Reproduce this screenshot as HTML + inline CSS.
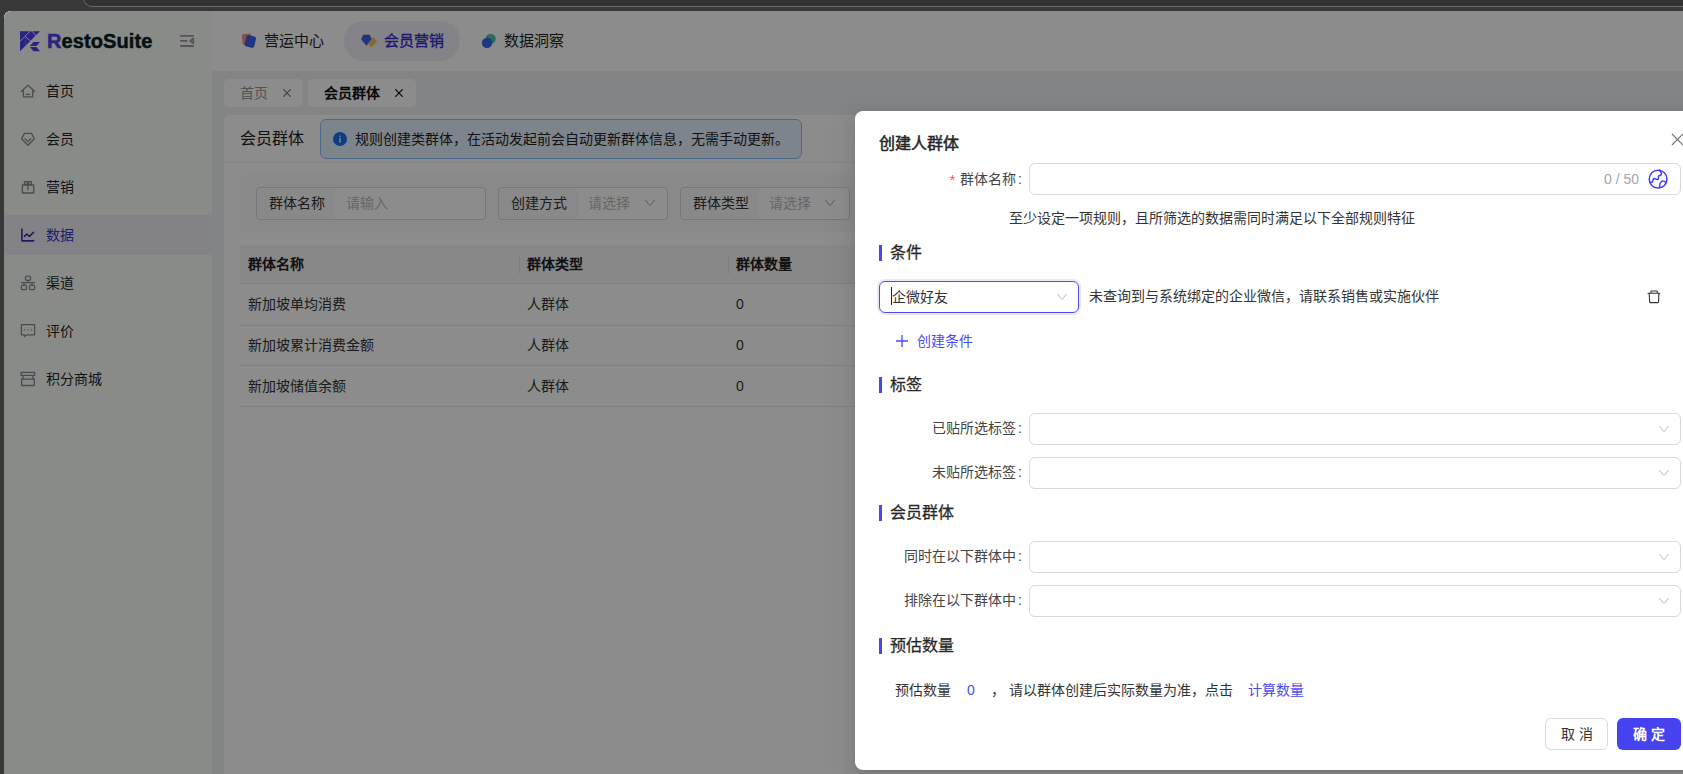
<!DOCTYPE html>
<html lang="zh-CN">
<head>
<meta charset="utf-8">
<style>
*{box-sizing:border-box;margin:0;padding:0}
html,body{width:1683px;height:774px;overflow:hidden}
body{background:#383838;font-family:"Liberation Sans",sans-serif;font-size:14px;color:#333;position:relative}
.abs{position:absolute}
#chrometab{left:83px;top:-19px;width:1700px;height:26px;border:1px solid #6a6a6a;border-radius:0 0 0 9px;background:#323232}
#win{left:4px;top:11px;width:1679px;height:763px;border-top-left-radius:7px;overflow:hidden;background:#fff}
#header{left:0;top:0;width:1679px;height:60px;background:#fff}
#sidebar{left:0;top:60px;width:208px;height:703px;background:#f9fdfa}
#content{left:208px;top:60px;width:1471px;height:703px;background:#eff1f4}
.menu{position:absolute;left:0;width:208px;height:40px;line-height:40px;font-size:14px;color:#1f1f1f}
.menu .ic{position:absolute;left:12px;top:9px;width:24px;height:24px}
.menu .tx{position:absolute;left:42px;top:0}
.menu.active{background:#eeeef6;color:#3b35c8}
.tab{position:absolute;top:8px;height:28px;border-radius:5px;background:#fff;font-size:14px;line-height:28px}
#mask{left:0;top:0;width:1679px;height:763px;background:rgba(0,0,0,0.45)}
#modal{left:855px;top:111px;width:900px;height:659px;background:#fff;border-radius:8px;box-shadow:0 6px 16px 0 rgba(0,0,0,0.08),0 3px 6px -4px rgba(0,0,0,0.12),0 9px 28px 8px rgba(0,0,0,0.05)}
.sec{position:absolute;left:24px;font-size:16px;color:#262626;line-height:20px;-webkit-text-stroke:0.25px #262626}
.sec:before{content:"";position:absolute;left:0;top:2px;width:3px;height:16px;background:#4a44f2}
.sec span{position:absolute;left:11px;top:0;white-space:nowrap}
.lbl{position:absolute;font-size:14px;color:#444;white-space:nowrap;text-align:right;line-height:20px}
.co{margin:0 8px 0 2px}
.inp{position:absolute;left:174px;width:652px;height:32px;border:1px solid #d9d9d9;border-radius:6px;background:#fff}
.arrow{position:absolute;right:10px;top:9px;width:12px;height:12px}
</style>
</head>
<body>
<div id="chrometab" class="abs"></div>
<div id="win" class="abs">
  <div id="header" class="abs">
    <div class="abs" style="left:0;top:0;width:208px;height:60px;background:#f9fdfa"></div>
    <!-- logo -->
    <svg class="abs" style="left:16px;top:20px" width="20" height="21" viewBox="0 0 20 21">
      <path d="M0 0.2H20L0 20.3Z" fill="#4b41f0"/>
      <path d="M9.9 14.9L13.4 11H20L16.5 14.9Z M9.9 16.1H16.5L20 20.2H13.4Z" fill="#4b41f0"/>
      <path d="M-0.5 10.9L10.4 0 M5.4 5.6L10.6 10.2 M11.8 0L16.3 4.9" stroke="#fff" stroke-width="0.9"/>
      <path d="M5.3 6.3V15.8" stroke="#fff" stroke-width="0.4" opacity="0.6"/>
    </svg>
    <div class="abs" style="left:43px;top:17px;font-size:20px;font-weight:bold;color:#0a1e24;letter-spacing:0.1px;line-height:26px;-webkit-text-stroke:0.5px #0a1e24"><span style="color:#4b41f0;-webkit-text-stroke:0.5px #4b41f0">R</span>estoSuite</div>
    <svg class="abs" style="left:172px;top:17px" width="24" height="24" viewBox="0 0 24 24">
      <path d="M4.2 7.9H17.8 M4.2 12.9H11.3 M4.2 18H17.8" stroke="#999" stroke-width="1.9"/>
      <path d="M17.3 10.3L14.2 12.9L17.3 15.5Z" stroke="#999" stroke-width="1.6" fill="none" stroke-linejoin="round"/>
    </svg>
    <div class="abs" style="left:340px;top:10px;width:116px;height:40px;border-radius:20px;background:#eeeef7"></div>
    <svg class="abs" style="left:232px;top:17px" width="24" height="24" viewBox="0 0 24 24">
      <rect x="6.2" y="5.8" width="9.2" height="11" rx="2" fill="#f59282" transform="rotate(-4 10.8 11.3)"/>
      <rect x="9.3" y="7.6" width="10" height="11.6" rx="2.2" fill="#3c62e6" transform="rotate(13 14.3 13.4)"/>
    </svg>
    <div class="abs" style="left:260px;top:19px;font-size:15px;line-height:22px;color:#1f1f1f">营运中心</div>
    <svg class="abs" style="left:352px;top:17px" width="24" height="24" viewBox="0 0 24 24">
      <path d="M17.4 9L21.1 13.6L15.5 19.8L12.4 16.1Z" fill="#f2c24a"/>
      <path d="M7.1 6.7H13.6L15.8 10.9L10.4 17.7L5.1 11.2Z" fill="#3c62e6"/>
    </svg>
    <div class="abs" style="left:380px;top:19px;font-size:15px;line-height:22px;color:#2f2bd0;-webkit-text-stroke:0.3px #2f2bd0">会员营销</div>
    <svg class="abs" style="left:472px;top:17px" width="24" height="24" viewBox="0 0 24 24">
      <circle cx="14.7" cy="10.9" r="5" fill="#45c4a6"/>
      <circle cx="11" cy="14.9" r="5.2" fill="#3c62e6"/>
    </svg>
    <div class="abs" style="left:500px;top:19px;font-size:15px;line-height:22px;color:#1f1f1f">数据洞察</div>
  </div>
  <div id="sidebar" class="abs">
    <div class="menu" style="top:0"><svg class="ic" viewBox="0 0 24 24"><path d="M5.3 11.5L11.9 5.1L18.6 11.5 M7.4 9.4V16.9H16.7V9.4 M10.2 14.4H13.8" stroke="#8a8a8a" stroke-width="1.3" fill="none" stroke-linejoin="round" stroke-linecap="round"/></svg><span class="tx">首页</span></div>
    <div class="menu" style="top:48px"><svg class="ic" viewBox="0 0 24 24"><path d="M8.4 5.4H15.5L18.3 10.7L11.9 17.2L5.6 10.7Z M9 10.7L11.9 13.6L14.7 10.8" stroke="#8a8a8a" stroke-width="1.3" fill="none" stroke-linejoin="round" stroke-linecap="round"/></svg><span class="tx">会员</span></div>
    <div class="menu" style="top:96px"><svg class="ic" viewBox="0 0 24 24"><path d="M6.4 9H17.7V17H6.4Z M11.9 5.5V13.6 M11.9 8.4C10.5 8.4 8.2 8.5 8.3 6.5C8.5 4.6 10.8 5 11.9 7.8C13 5 15.4 4.6 15.6 6.5C15.7 8.5 13.4 8.4 11.9 8.4" stroke="#8a8a8a" stroke-width="1.3" fill="none" stroke-linejoin="round" stroke-linecap="round"/></svg><span class="tx">营销</span></div>
    <div class="menu active" style="top:144px"><svg class="ic" viewBox="0 0 24 24"><path d="M5.9 5.1V16.9H17.7 M8.4 12.4L10.7 10.2L13.5 12.4L17.5 8.4" stroke="#3a33b8" stroke-width="1.6" fill="none" stroke-linejoin="round" stroke-linecap="round"/></svg><span class="tx">数据</span></div>
    <div class="menu" style="top:192px"><svg class="ic" viewBox="0 0 24 24"><rect x="9.5" y="4.2" width="5.1" height="4.2" rx="1.3" stroke="#8a8a8a" stroke-width="1.3" fill="none" stroke-linejoin="round" stroke-linecap="round"/><rect x="5.4" y="13.2" width="5.1" height="4.5" rx="1.3" stroke="#8a8a8a" stroke-width="1.3" fill="none" stroke-linejoin="round" stroke-linecap="round"/><rect x="13.5" y="13.2" width="5.1" height="4.5" rx="1.3" stroke="#8a8a8a" stroke-width="1.3" fill="none" stroke-linejoin="round" stroke-linecap="round"/><path d="M11.9 8.4V10.7 M5.4 10.7H18.6 M7.9 10.7V13.2 M16 10.7V13.2" stroke="#8a8a8a" stroke-width="1.3" fill="none" stroke-linejoin="round" stroke-linecap="round"/></svg><span class="tx">渠道</span></div>
    <div class="menu" style="top:240px"><svg class="ic" viewBox="0 0 24 24"><path d="M5.4 4.65H18.6V14.9H10.6L8.4 16.6V14.9H5.4Z" stroke="#8a8a8a" stroke-width="1.3" fill="none" stroke-linejoin="round" stroke-linecap="round"/><path d="M8.4 9.9H8.5 M11.9 9.9H12 M15.5 9.9H15.6" stroke="#8a8a8a" stroke-width="1.4" stroke-linecap="round"/></svg><span class="tx">评价</span></div>
    <div class="menu" style="top:288px"><svg class="ic" viewBox="0 0 24 24"><path d="M5.1 4.3H18.6V7.4H5.1Z M7 7.4V11.2 M16.9 7.4V11.2 M5.6 11.2H18.3V17.5H5.6Z" stroke="#8a8a8a" stroke-width="1.3" fill="none" stroke-linejoin="round" stroke-linecap="round"/></svg><span class="tx">积分商城</span></div>
  </div>
  <div id="content" class="abs">
    <div class="tab" style="left:12px;width:79px;color:#999"><span class="abs" style="left:16px">首页</span><svg class="abs" style="left:59px;top:10px" width="8" height="8" viewBox="0 0 8 8"><path d="M0.2 0.2L7.8 7.8M7.8 0.2L0.2 7.8" stroke="#777" stroke-width="1.1"/></svg></div>
    <div class="tab" style="left:96px;width:108px;color:#111;font-weight:bold"><span class="abs" style="left:16px">会员群体</span><svg class="abs" style="left:87px;top:10px" width="8" height="8" viewBox="0 0 8 8"><path d="M0.2 0.2L7.8 7.8M7.8 0.2L0.2 7.8" stroke="#111" stroke-width="1.2"/></svg></div>
    <!-- page header -->
    <div class="abs" style="left:12px;top:44px;width:1460px;height:48px;background:#fff;border-radius:6px 6px 0 0;border-bottom:1px solid #f0f0f0"></div>
    <div class="abs" style="left:28px;top:57px;font-size:16px;line-height:22px;color:#222">会员群体</div>
    <div class="abs" style="left:108px;top:48px;width:482px;height:40px;border:1px solid #8fc0f8;border-radius:6px;background:#e6f1fd"></div>
    <svg class="abs" style="left:121px;top:61px" width="14" height="14" viewBox="0 0 14 14"><circle cx="7" cy="7" r="7" fill="#1a6ff0"/><rect x="6.3" y="6" width="1.4" height="4.5" fill="#fff"/><circle cx="7" cy="4.2" r="0.8" fill="#fff"/></svg>
    <div class="abs" style="left:143px;top:57px;font-size:14px;line-height:22px;color:#222">规则创建类群体，在活动发起前会自动更新群体信息，无需手动更新。</div>
    <!-- body panel -->
    <div class="abs" style="left:12px;top:92px;width:1460px;height:680px;background:#fff"></div>
    <div class="abs" style="left:28px;top:104px;width:1440px;height:57px;background:#f9f9f9;border-radius:6px"></div>
    <div class="abs" style="left:44px;top:116px;width:230px;height:33px;border:1px solid #d9d9d9;border-radius:4px;background:#fff"></div>
    <div class="abs" style="left:45px;top:117px;width:78px;height:31px;background:#fafafa;border-radius:4px 0 0 4px"></div>
    <div class="abs" style="left:57px;top:121px;line-height:22px;color:#333">群体名称</div>
    <div class="abs" style="left:134px;top:121px;line-height:22px;color:#bbb">请输入</div>
    <div class="abs" style="left:286px;top:116px;width:170px;height:33px;border:1px solid #d9d9d9;border-radius:4px;background:#fff"></div>
    <div class="abs" style="left:287px;top:117px;width:78px;height:31px;background:#fafafa;border-radius:4px 0 0 4px"></div>
    <div class="abs" style="left:299px;top:121px;line-height:22px;color:#333">创建方式</div>
    <div class="abs" style="left:376px;top:121px;line-height:22px;color:#bbb">请选择</div>
    <svg class="abs" style="left:432px;top:126px" width="12" height="12" viewBox="0 0 12 12"><path d="M1.4 3L6 8.6L10.6 3" stroke="#aaa" fill="none"/></svg>
    <div class="abs" style="left:468px;top:116px;width:170px;height:33px;border:1px solid #d9d9d9;border-radius:4px;background:#fff"></div>
    <div class="abs" style="left:469px;top:117px;width:78px;height:31px;background:#fafafa;border-radius:4px 0 0 4px"></div>
    <div class="abs" style="left:481px;top:121px;line-height:22px;color:#333">群体类型</div>
    <div class="abs" style="left:557px;top:121px;line-height:22px;color:#bbb">请选择</div>
    <svg class="abs" style="left:612px;top:126px" width="12" height="12" viewBox="0 0 12 12"><path d="M1.4 3L6 8.6L10.6 3" stroke="#aaa" fill="none"/></svg>
    <!-- table -->
    <div class="abs" style="left:28px;top:174px;width:1440px;height:39px;background:#f7f7f7;border-bottom:1px solid #ececec"></div>
    <div class="abs" style="left:307px;top:185px;width:1px;height:18px;background:#e5e5e5"></div>
    <div class="abs" style="left:516px;top:185px;width:1px;height:18px;background:#e5e5e5"></div>
    <div class="abs" style="left:36px;top:182px;line-height:22px;color:#222;font-weight:bold">群体名称</div>
    <div class="abs" style="left:315px;top:182px;line-height:22px;color:#222;font-weight:bold">群体类型</div>
    <div class="abs" style="left:524px;top:182px;line-height:22px;color:#222;font-weight:bold">群体数量</div>
    <div class="abs" style="left:28px;top:254px;width:1440px;height:1px;background:#ececec"></div>
    <div class="abs" style="left:28px;top:294px;width:1440px;height:1px;background:#ececec"></div>
    <div class="abs" style="left:28px;top:335px;width:1440px;height:1px;background:#ececec"></div>
    <div class="abs" style="left:36px;top:222px;line-height:22px;color:#333">新加坡单均消费</div>
    <div class="abs" style="left:315px;top:222px;line-height:22px;color:#333">人群体</div>
    <div class="abs" style="left:524px;top:222px;line-height:22px;color:#333">0</div>
    <div class="abs" style="left:36px;top:263px;line-height:22px;color:#333">新加坡累计消费金额</div>
    <div class="abs" style="left:315px;top:263px;line-height:22px;color:#333">人群体</div>
    <div class="abs" style="left:524px;top:263px;line-height:22px;color:#333">0</div>
    <div class="abs" style="left:36px;top:304px;line-height:22px;color:#333">新加坡储值余额</div>
    <div class="abs" style="left:315px;top:304px;line-height:22px;color:#333">人群体</div>
    <div class="abs" style="left:524px;top:304px;line-height:22px;color:#333">0</div>
  </div>
<div id="mask" class="abs"></div>
</div>
<div id="modal" class="abs">
  <div class="abs" style="left:24px;top:22px;font-size:16px;line-height:22px;color:#262626;-webkit-text-stroke:0.5px #262626">创建人群体</div>
  <svg class="abs" style="left:816px;top:22px" width="13" height="13" viewBox="0 0 13 13"><path d="M1 1L12 12M12 1L1 12" stroke="#777" stroke-width="1.2"/></svg>
  <div class="lbl" style="right:725px;top:58px"><span style="color:#ff4d4f;margin-right:5px;position:relative;top:1px">*</span>群体名称<span class="co">:</span></div>
  <div class="inp" style="top:52px"></div>
  <div class="abs" style="right:116px;top:58px;font-size:14px;line-height:20px;color:#a6a6a6">0 / 50</div>
  <svg class="abs" style="left:789px;top:54px" width="28" height="28" viewBox="0 0 28 28"><circle cx="14.1" cy="14.1" r="8.9" stroke="#3b3bf5" stroke-width="1.45" fill="none"/><path d="M6.1 17.4L8.5 17L9.3 13.8L10.9 13.5L13 14.7L14.3 14.1L14.6 11L17 10L17.5 8.3L16.3 6.2L15.8 4.9 M15.6 22.4L15.9 18.6L18.1 15.9L20.3 16.4L22.2 17.4" stroke="#3b3bf5" stroke-width="1.4" fill="none" stroke-linejoin="round" stroke-linecap="round"/></svg>
  <div class="abs" style="left:154px;top:97px;font-size:14px;line-height:20px;color:#333">至少设定一项规则，且所筛选的数据需同时满足以下全部规则特征</div>
  <div class="sec" style="top:132px"><span>条件</span></div>
  <div class="abs" style="left:24px;top:170px;width:200px;height:32px;border:1px solid #4b4bf5;border-radius:6px;box-shadow:0 0 0 2px rgba(75,75,245,0.12)"></div>
  <div class="abs" style="left:36px;top:176px;width:1px;height:18px;background:#222"></div>
  <div class="abs" style="left:37px;top:176px;font-size:14px;line-height:20px;color:#333">企微好友</div>
  <svg class="abs" style="left:201px;top:180px" width="12" height="12" viewBox="0 0 12 12"><path d="M1.4 3L6 8.6L10.6 3" stroke="#bbb" fill="none"/></svg>
  <div class="abs" style="left:234px;top:175px;font-size:14px;line-height:20px;color:#333">未查询到与系统绑定的企业微信，请联系销售或实施伙伴</div>
  <svg class="abs" style="left:791px;top:177px" width="16" height="18" viewBox="0 0 16 18"><path d="M2 5.3H13.8 M4.9 5.3V3.7Q4.9 3 5.6 3H10.6Q11.3 3 11.3 3.7V5.3 M3.2 5.3L3.6 14Q3.6 14.6 4.2 14.6H11.9Q12.5 14.6 12.5 14L12.9 5.3" stroke="#333" stroke-width="1.1" fill="none" stroke-linejoin="round" stroke-linecap="round"/></svg>
  <svg class="abs" style="left:41px;top:224px" width="12" height="12" viewBox="0 0 12 12"><path d="M6 0V12M0 6H12" stroke="#4b4bf5" stroke-width="1.3"/></svg>
  <div class="abs" style="left:62px;top:220px;font-size:14px;line-height:20px;color:#4b4bf5">创建条件</div>
  <div class="sec" style="top:264px"><span>标签</span></div>
  <div class="lbl" style="right:725px;top:307px">已贴所选标签<span class="co">:</span></div>
  <div class="inp" style="top:302px"><svg class="arrow" viewBox="0 0 12 12"><path d="M1.4 3L6 8.6L10.6 3" stroke="#bbb" fill="none"/></svg></div>
  <div class="lbl" style="right:725px;top:351px">未贴所选标签<span class="co">:</span></div>
  <div class="inp" style="top:346px"><svg class="arrow" viewBox="0 0 12 12"><path d="M1.4 3L6 8.6L10.6 3" stroke="#bbb" fill="none"/></svg></div>
  <div class="sec" style="top:392px"><span>会员群体</span></div>
  <div class="lbl" style="right:725px;top:435px">同时在以下群体中<span class="co">:</span></div>
  <div class="inp" style="top:430px"><svg class="arrow" viewBox="0 0 12 12"><path d="M1.4 3L6 8.6L10.6 3" stroke="#bbb" fill="none"/></svg></div>
  <div class="lbl" style="right:725px;top:479px">排除在以下群体中<span class="co">:</span></div>
  <div class="inp" style="top:474px"><svg class="arrow" viewBox="0 0 12 12"><path d="M1.4 3L6 8.6L10.6 3" stroke="#bbb" fill="none"/></svg></div>
  <div class="sec" style="top:525px"><span>预估数量</span></div>
  <div class="abs" style="left:40px;top:569px;font-size:14px;line-height:20px;color:#333">预估数量</div>
  <div class="abs" style="left:112px;top:569px;font-size:14px;line-height:20px;color:#4b4bf5">0</div>
  <div class="abs" style="left:136px;top:569px;font-size:14px;line-height:20px;color:#333">，</div>
  <div class="abs" style="left:154px;top:569px;font-size:14px;line-height:20px;color:#333">请以群体创建后实际数量为准，点击</div>
  <div class="abs" style="left:393px;top:569px;font-size:14px;line-height:20px;color:#4b4bf5">计算数量</div>
  <div class="abs" style="left:690px;top:607px;width:63px;height:32px;border:1px solid #d9d9d9;border-radius:6px;background:#fff;text-align:center;line-height:30px;font-size:14px;color:#333;letter-spacing:4px;padding-left:4px">取消</div>
  <div class="abs" style="left:762px;top:607px;width:64px;height:32px;border-radius:6px;background:#4542f0;text-align:center;line-height:32px;font-size:14px;color:#fff;font-weight:bold;letter-spacing:4px;padding-left:4px">确定</div>
</div>
</body>
</html>
